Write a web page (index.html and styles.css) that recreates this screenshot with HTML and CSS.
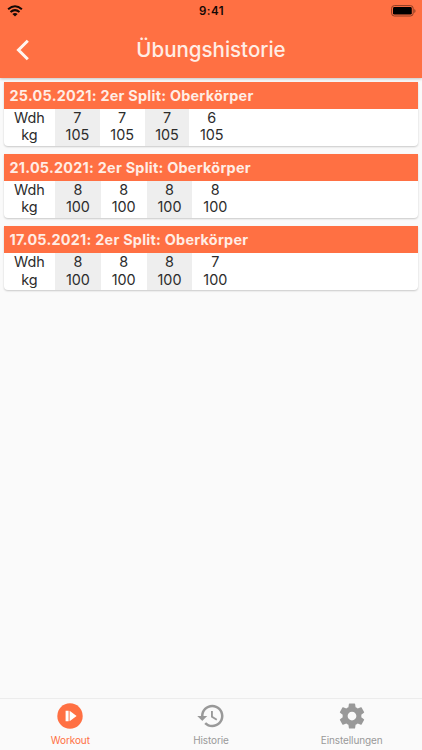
FILE: index.html
```html
<!DOCTYPE html>
<html lang="de">
<head>
<meta charset="utf-8">
<meta name="viewport" content="width=device-width, initial-scale=1">
<title>Übungshistorie</title>
<link rel="stylesheet" href="styles.css">
</head>
<body>
<header class="top">
  <div class="status">
    <svg class="wifi" viewBox="0 0 16 12"><g fill="none" stroke="#140805" stroke-width="2"><path d="M1.1 4.3Q8-1.8 14.9 4.3"/><path d="M3.5 7.1Q8 3.2 12.5 7.1"/></g><path d="M5.4 9Q8 6.8 10.6 9L8 11.6Z" fill="#140805"/></svg>
    <span class="time">9:41</span>
    <svg class="battery" viewBox="0 0 25 12"><rect x=".6" y=".6" width="21.6" height="10.4" rx="2.8" fill="none" stroke="#8b3d24"/><rect x="2" y="2" width="18.8" height="7.6" rx="1.4" fill="#000"/><path d="M23.3 4v4q1.2-.6 1.2-2t-1.2-2z" fill="#8b3d24"/></svg>
  </div>
  <div class="bar">
    <svg class="back" viewBox="0 0 14 22"><path d="M11.8 1.8 2.5 11l9.3 9.2" fill="none" stroke="#fff5f0" stroke-width="3"/></svg>
    <h1>Übungshistorie</h1>
  </div>
</header>
<main>
  <section class="card first">
    <h2>25.05.2021: 2er Split: Oberkörper</h2>
    <div class="sets"><div class="label">Wdh<br>kg</div><div>7<br>105</div><div>7<br>105</div><div>7<br>105</div><div>6<br>105</div></div>
  </section>
  <section class="card">
    <h2>21.05.2021: 2er Split: Oberkörper</h2>
    <div class="sets"><div class="label">Wdh<br>kg</div><div>8<br>100</div><div>8<br>100</div><div>8<br>100</div><div>8<br>100</div></div>
  </section>
  <section class="card">
    <h2>17.05.2021: 2er Split: Oberkörper</h2>
    <div class="sets"><div class="label">Wdh<br>kg</div><div>8<br>100</div><div>8<br>100</div><div>8<br>100</div><div>7<br>100</div></div>
  </section>
</main>
<nav>
  <a class="active"><svg viewBox="0 0 30 30"><circle cx="15" cy="15" r="12.7" fill="currentColor"/><path d="M10.6 9.8v10.4h3V9.8zM14.6 9.8v10.4l7-5.2z" fill="#fff"/></svg><span>Workout</span></a>
  <a><svg viewBox="0 0 24 24" fill="currentColor"><path d="M13 3c-4.97 0-9 4.03-9 9H1l3.89 3.89.07.14L9 12H6c0-3.87 3.13-7 7-7s7 3.13 7 7-3.13 7-7 7c-1.93 0-3.68-.79-4.94-2.06l-1.42 1.42C8.27 19.99 10.51 21 13 21c4.97 0 9-4.03 9-9s-4.03-9-9-9zm-1 5v5l4.28 2.54.72-1.21-3.5-2.08V8H12z"/></svg><span>Historie</span></a>
  <a><svg viewBox="0 0 24 24" fill="currentColor"><path d="M19.43 12.98c.04-.32.07-.64.07-.98s-.03-.66-.07-.98l2.11-1.65c.19-.15.24-.42.12-.64l-2-3.46c-.12-.22-.39-.3-.61-.22l-2.49 1c-.52-.4-1.08-.73-1.69-.98l-.38-2.65C14.46 2.18 14.25 2 14 2h-4c-.25 0-.46.18-.49.42l-.38 2.65c-.61.25-1.17.59-1.69.98l-2.49-1c-.23-.09-.49 0-.61.22l-2 3.46c-.13.22-.07.49.12.64l2.11 1.65c-.04.32-.07.65-.07.98s.03.66.07.98l-2.11 1.65c-.19.15-.24.42-.12.64l2 3.46c.12.22.39.3.61.22l2.49-1c.52.4 1.08.73 1.69.98l.38 2.65c.03.24.24.42.49.42h4c.25 0 .46-.18.49-.42l.38-2.65c.61-.25 1.17-.59 1.69-.98l2.49 1c.23.09.49 0 .61-.22l2-3.46c.12-.22.07-.49-.12-.64l-2.11-1.65zM12 15.5c-1.93 0-3.5-1.57-3.5-3.5s1.57-3.5 3.5-3.5 3.5 1.57 3.5 3.5-1.57 3.5-3.5 3.5z"/></svg><span>Einstellungen</span></a>
</nav>
</body>
</html>
```
FILE: styles.css
```css
* { box-sizing: border-box; }
body {
  margin: 0;
  height: 750px;
  display: flex;
  flex-direction: column;
  background: #fafafa;
  font-family: Inter, "Liberation Sans", sans-serif;
  color: #2c2c2c;
  overflow: hidden;
}
.top {
  height: 78px;
  background: #ff7043;
  box-shadow: 0 1px 3px rgba(0, 0, 0, .22);
}
.status {
  height: 21px;
  display: grid;
  grid-template-columns: 1fr auto 1fr;
  align-items: center;
  padding: 0 6px 0 7px;
}
.wifi { width: 16px; height: 12px; }
.battery { width: 25px; height: 12px; justify-self: end; }
.time { font-size: 11.5px; font-weight: 600; letter-spacing: .5px; color: #140805; }
.bar {
  height: 57px;
  display: grid;
  grid-template-columns: 40px 1fr 40px;
  align-items: center;
}
.back { width: 14px; height: 22px; margin-left: 16px; }
h1 {
  margin: 0;
  text-align: center;
  font-size: 20.5px;
  font-weight: 500;
  color: #ffede5;
}
main {
  flex: 1;
  padding: 3.8px 4px 0;
}
.card {
  height: 64.2px;
  margin-bottom: 8px;
  background: #fff;
  border-radius: 0 0 4px 4px;
  box-shadow: 0 1px 2px rgba(0, 0, 0, .2);
  overflow: hidden;
}
h2 {
  margin: 0;
  height: 27.3px;
  padding-left: 5.5px;
  background: #ff7043;
  color: #ffede5;
  font-size: 14.4px;
  line-height: 27.8px;
  font-weight: 700;
  letter-spacing: .25px;
  white-space: nowrap;
}
.sets {
  height: 37px;
  display: grid;
  grid-template-columns: 51px repeat(4, 45.8px);
  font-size: 14.4px;
  line-height: 17.2px;
  text-align: center;
}
.first .sets { grid-template-columns: 51px repeat(4, 44.8px); }
.sets div:nth-child(even) { background: #eee; }
nav {
  height: 52px;
  display: grid;
  grid-template-columns: repeat(3, 1fr);
  border-top: 1px solid #ececec;
  background: #fafafa;
}
nav a {
  display: flex;
  flex-direction: column;
  align-items: center;
  padding-top: 2px;
  color: #999;
  font-size: 10px;
  line-height: 14px;
  letter-spacing: -.1px;
}
nav svg { width: 30px; height: 30px; }
nav span { margin-top: 2px; }
nav .active { color: #ff7043; }
```
